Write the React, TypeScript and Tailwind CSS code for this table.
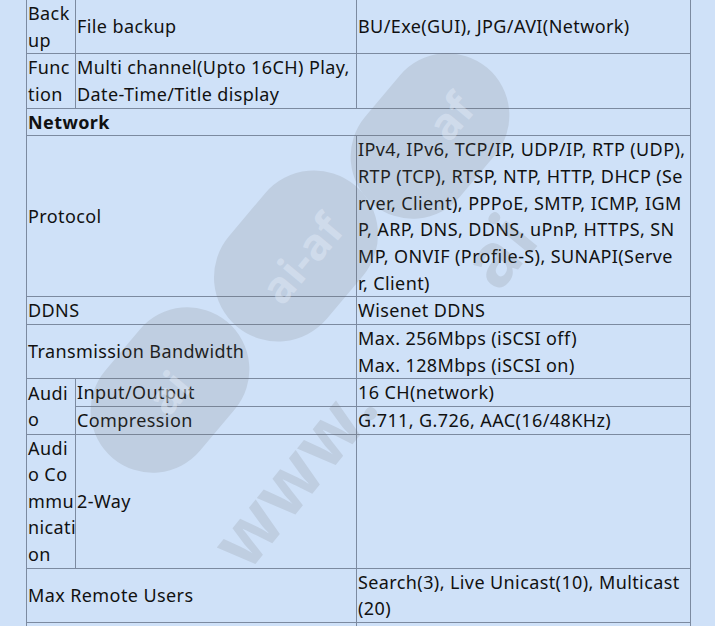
import React from "react";

const cell = "border border-[#7c8aa0] px-[1px] py-0 align-middle whitespace-nowrap";

// lines are broken where the source page broke them
const Lines = ({ rows }: { rows: string[] }) => (
  <>
    {rows.map((r, i) => (
      <React.Fragment key={i}>
        {i > 0 && <br />}
        {r}
      </React.Fragment>
    ))}
  </>
);

export default function App() {
  return (
    <div className="relative min-h-[626px] overflow-hidden bg-[#cfe1f8] font-['Noto_Sans',sans-serif] text-[18px] leading-[26.66px] tracking-[0.4px] text-[#111]">
      <div className="-mt-px pl-[26px]">
        <table className="w-[664px] table-fixed border-collapse">
          <colgroup>
            <col className="w-[49px]" />
            <col className="w-[281px]" />
            <col className="w-[334px]" />
          </colgroup>
          <tbody>
            <tr>
              <td className={cell}><Lines rows={["Back", "up"]} /></td>
              <td className={cell}>File backup</td>
              <td className={cell}>BU/Exe(GUI), JPG/AVI(Network)</td>
            </tr>
            <tr>
              <td className={cell}><Lines rows={["Func", "tion"]} /></td>
              <td className={cell}>
                <Lines rows={["Multi channel(Upto 16CH) Play,", "Date-Time/Title display"]} />
              </td>
              <td className={cell}></td>
            </tr>
            <tr>
              <td className={`${cell} font-bold`} colSpan={3}>
                Network
              </td>
            </tr>
            <tr>
              <td className={cell} colSpan={2}>Protocol</td>
              <td className={cell}>
                <Lines
                  rows={[
                    "IPv4, IPv6, TCP/IP, UDP/IP, RTP (UDP),",
                    "RTP (TCP), RTSP, NTP, HTTP, DHCP (Se",
                    "rver, Client), PPPoE, SMTP, ICMP, IGM",
                    "P, ARP, DNS, DDNS, uPnP, HTTPS, SN",
                    "MP, ONVIF (Profile-S), SUNAPI(Serve",
                    "r, Client)",
                  ]}
                />
              </td>
            </tr>
            <tr>
              <td className={cell} colSpan={2}>DDNS</td>
              <td className={cell}>Wisenet DDNS</td>
            </tr>
            <tr>
              <td className={cell} colSpan={2}>Transmission Bandwidth</td>
              <td className={cell}>
                <Lines rows={["Max. 256Mbps (iSCSI off)", "Max. 128Mbps (iSCSI on)"]} />
              </td>
            </tr>
            <tr>
              <td className={cell} rowSpan={2}><Lines rows={["Audi", "o"]} /></td>
              <td className={cell}>Input/Output</td>
              <td className={cell}>16 CH(network)</td>
            </tr>
            <tr>
              <td className={cell}>Compression</td>
              <td className={cell}>G.711, G.726, AAC(16/48KHz)</td>
            </tr>
            <tr>
              <td className={cell}><Lines rows={["Audi", "o Co", "mmu", "nicati", "on"]} /></td>
              <td className={cell}>2-Way</td>
              <td className={cell}></td>
            </tr>
            <tr>
              <td className={cell} colSpan={2}>Max Remote Users</td>
              <td className={cell}>
                <Lines rows={["Search(3), Live Unicast(10), Multicast", "(20)"]} />
              </td>
            </tr>
            <tr>
              <td className={`${cell} h-[27px]`} colSpan={2}></td>
              <td className={cell}></td>
            </tr>
          </tbody>
        </table>
      </div>

      {/* watermark: grey blobs with the site name, then the address in big letters */}
      <div className="pointer-events-none absolute inset-0 opacity-[0.16]">
        <div className="absolute left-[170px] top-[390px] h-[124px] w-[178px] -translate-x-1/2 -translate-y-1/2 -rotate-[50deg] rounded-full bg-[#6e6e6e]" />
        <div className="absolute left-[296px] top-[256px] h-[128px] w-[184px] -translate-x-1/2 -translate-y-1/2 -rotate-[50deg] rounded-full bg-[#6e6e6e]" />
        <div className="absolute left-[430px] top-[136px] h-[124px] w-[178px] -translate-x-1/2 -translate-y-1/2 -rotate-[50deg] rounded-full bg-[#6e6e6e]" />
        <div className="absolute left-[226px] top-[556px] origin-left -translate-y-1/2 -rotate-[51deg] whitespace-nowrap font-['Open_Sans',sans-serif] text-[74px] font-bold leading-none text-[#6e6e6e]">
          www.
        </div>
        <div className="absolute left-[498px] top-[250px] -translate-x-1/2 -translate-y-1/2 -rotate-[51deg] whitespace-nowrap font-['Open_Sans',sans-serif] text-[74px] font-bold leading-none text-[#6e6e6e]">
          ai
        </div>
      </div>
      <div className="pointer-events-none absolute inset-0 font-['Open_Sans',sans-serif] text-[44px] font-bold leading-none text-[#e4edf9]/45">
        <div className="absolute left-[301px] top-[258px] -translate-x-1/2 -translate-y-1/2 -rotate-[50deg]">ai-af</div>
        <div className="absolute left-[168px] top-[392px] -translate-x-1/2 -translate-y-1/2 -rotate-[50deg]">ai</div>
        <div className="absolute left-[450px] top-[116px] -translate-x-1/2 -translate-y-1/2 -rotate-[50deg]">af</div>
      </div>
    </div>
  );
}
